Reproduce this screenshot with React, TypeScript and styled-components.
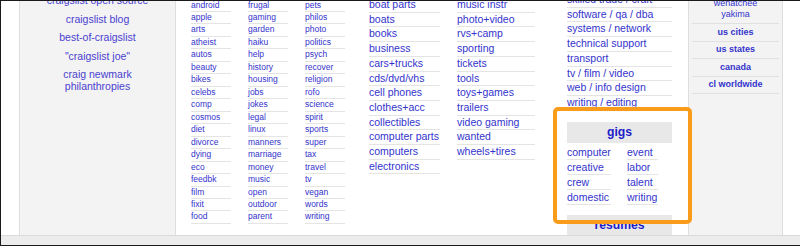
import React from 'react';
import styled, { createGlobalStyle } from 'styled-components';

const GlobalStyle = createGlobalStyle`
  html, body {
    margin: 0;
    padding: 0;
    background: #fff;
  }
  body {
    font-family: "Liberation Sans", Arial, sans-serif;
  }
  ul {
    list-style: none;
    margin: 0;
    padding: 0;
  }
`;

const Frame = styled.div`
  width: 800px;
  height: 246px;
  box-sizing: border-box;
  border-top: 1px solid #1a1a1a;
  border-left: 1px solid #1a1a1a;
  border-bottom: 1px solid #1a1a1a;
  display: flex;
  flex-direction: column;
  overflow: hidden;
  background: #fff;
`;

const Main = styled.div`
  position: relative;
  flex: 1;
  display: flex;
  align-items: flex-start;
  overflow: hidden;
`;

const BottomBar = styled.div`
  height: 9px;
  background: #ececec;
  border-top: 1px solid #dadada;
`;

const LeftPanel = styled.div`
  margin-left: 18px;
  width: 155px;
  align-self: stretch;
  background: #f3f3f3;
  border-left: 1px solid #dedede;
  border-right: 1px solid #dedede;
  display: flex;
  flex-direction: column;
  align-items: center;
`;

const LeftList = styled.ul`
  margin-top: -7px;
  display: flex;
  flex-direction: column;
  align-items: center;
  gap: 6.5px;
`;

const LeftLink = styled.li`
  max-width: 110px;
  text-align: center;
  font-size: 10.5px;
  line-height: 12px;
  color: #4a40d0;
`;

const Group = styled.div<{ $ml: number; $mt: number }>`
  margin-left: ${p => p.$ml}px;
  margin-top: ${p => p.$mt}px;
  display: flex;
  gap: 17px;
`;

const Column = styled.ul<{ $w: number }>`
  width: ${p => p.$w}px;
`;

const Item = styled.li<{ $size: number; $lh: number }>`
  font-size: ${p => p.$size}px;
  line-height: ${p => p.$lh}px;
  color: #3333cc;
  border-bottom: 1px solid #e4e4e4;
  white-space: nowrap;
`;

const JobsColumn = styled.div`
  margin-left: 32px;
  margin-top: -8px;
  width: 105px;
  display: flex;
  flex-direction: column;
`;

const SectionHead = styled.div<{ $mt: number }>`
  margin-top: ${p => p.$mt}px;
  height: 21px;
  background: #e8e8e8;
  text-align: center;
  font-size: 12.2px;
  font-weight: bold;
  line-height: 21px;
  color: #1d1dc8;
`;

const GigsGrid = styled.div`
  margin-top: 2.5px;
  display: flex;
  gap: 16px;
`;

const NearbyPanel = styled.div`
  margin-left: 16px;
  width: 87px;
  align-self: stretch;
  background: #f3f3f3;
  border-left: 1px solid #dedede;
  border-right: 1px solid #dedede;
  padding: 0 3px;
  box-sizing: content-box;
`;

const NearbyList = styled.ul`
  margin-top: -5.5px;
`;

const NearbyItem = styled.li<{ $bold?: boolean }>`
  padding: 2.5px 0;
  font-size: 9px;
  line-height: 11.4px;
  text-align: center;
  font-weight: ${p => (p.$bold ? 'bold' : 'normal')};
  color: #3333cc;
  border-bottom: 1px solid #e0e0e0;
`;

const Highlight = styled.div`
  position: absolute;
  left: 552px;
  top: 106px;
  width: 139px;
  height: 117px;
  box-sizing: border-box;
  border: 4px solid #fa9c1b;
  border-radius: 5px;
  pointer-events: none;
`;

const leftLinks = [
  'craigslist open source',
  'craigslist blog',
  'best-of-craigslist',
  '"craigslist joe"',
  'craig newmark philanthropies',
];

const forums = [
  ['android', 'apple', 'arts', 'atheist', 'autos', 'beauty', 'bikes', 'celebs', 'comp', 'cosmos', 'diet', 'divorce', 'dying', 'eco', 'feedbk', 'film', 'fixit', 'food'],
  ['frugal', 'gaming', 'garden', 'haiku', 'help', 'history', 'housing', 'jobs', 'jokes', 'legal', 'linux', 'manners', 'marriage', 'money', 'music', 'open', 'outdoor', 'parent'],
  ['pets', 'philos', 'photo', 'politics', 'psych', 'recover', 'religion', 'rofo', 'science', 'spirit', 'sports', 'super', 'tax', 'travel', 'tv', 'vegan', 'words', 'writing'],
];

const forSale = [
  ['boat parts', 'boats', 'books', 'business', 'cars+trucks', 'cds/dvd/vhs', 'cell phones', 'clothes+acc', 'collectibles', 'computer parts', 'computers', 'electronics'],
  ['music instr', 'photo+video', 'rvs+camp', 'sporting', 'tickets', 'tools', 'toys+games', 'trailers', 'video gaming', 'wanted', 'wheels+tires'],
];

const jobs = [
  'skilled trade / craft',
  'software / qa / dba',
  'systems / network',
  'technical support',
  'transport',
  'tv / film / video',
  'web / info design',
  'writing / editing',
];

const gigs = [
  ['computer', 'creative', 'crew', 'domestic'],
  ['event', 'labor', 'talent', 'writing'],
];

export default function App() {
  return (
    <>
      <GlobalStyle />
      <Frame>
        <Main>
          <LeftPanel>
            <LeftList>
              {leftLinks.map(l => (
                <LeftLink key={l}>{l}</LeftLink>
              ))}
            </LeftList>
          </LeftPanel>

          <Group $ml={15} $mt={-1.5}>
            {forums.map((col, i) => (
              <Column key={i} $w={40}>
                {col.map(f => (
                  <Item key={f} $size={8.5} $lh={11.47}>{f}</Item>
                ))}
              </Column>
            ))}
          </Group>

          <Group $ml={24} $mt={-3}>
            {forSale.map((col, i) => (
              <Column key={i} $w={i === 0 ? 71 : 78}>
                {col.map(s => (
                  <Item key={s} $size={10.5} $lh={13.7}>{s}</Item>
                ))}
              </Column>
            ))}
          </Group>

          <JobsColumn>
            <ul>
              {jobs.map(j => (
                <Item key={j} $size={10.5} $lh={13.7}>{j}</Item>
              ))}
            </ul>
            <SectionHead $mt={11}>gigs</SectionHead>
            <GigsGrid>
              {gigs.map((col, i) => (
                <Column key={i} $w={i === 0 ? 44 : 31}>
                  {col.map(g => (
                    <Item key={g} $size={10.5} $lh={14}>{g}</Item>
                  ))}
                </Column>
              ))}
            </GigsGrid>
            <SectionHead $mt={10}>resumes</SectionHead>
          </JobsColumn>

          <NearbyPanel>
            <NearbyList>
              <NearbyItem>
                wenatchee
                <br />
                yakima
              </NearbyItem>
              <NearbyItem $bold>us cities</NearbyItem>
              <NearbyItem $bold>us states</NearbyItem>
              <NearbyItem $bold>canada</NearbyItem>
              <NearbyItem $bold>cl worldwide</NearbyItem>
            </NearbyList>
          </NearbyPanel>

          <Highlight />
        </Main>
        <BottomBar />
      </Frame>
    </>
  );
}
